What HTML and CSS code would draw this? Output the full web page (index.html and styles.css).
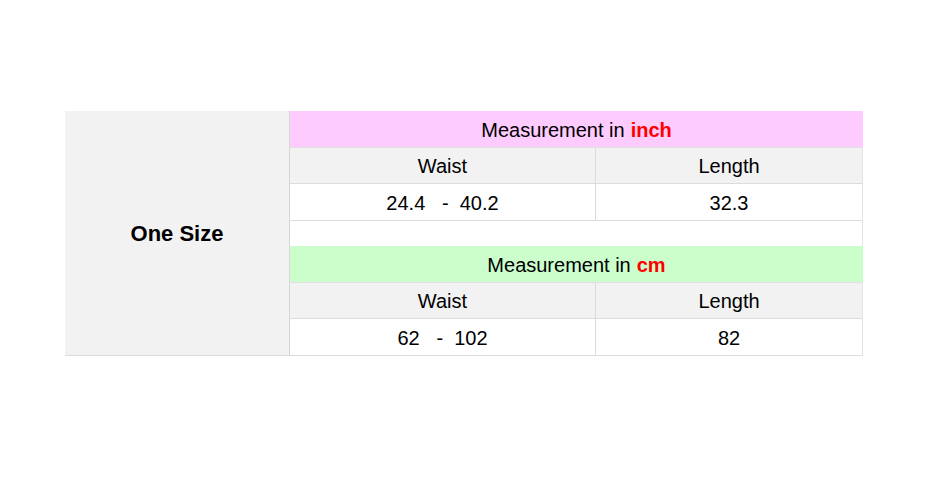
FILE: index.html
```html
<!DOCTYPE html>
<html>
<head>
<meta charset="utf-8">
<link rel="stylesheet" href="styles.css">
</head>
<body>
<div class="page">
  <div class="chart">
    <div class="size">One Size</div>
    <div class="cell head pink span2">Measurement in <b class="unit">inch</b></div>
    <div class="cell grey">Waist</div>
    <div class="cell grey">Length</div>
    <div class="cell white"><span class="pre">24.4   -  40.2</span></div>
    <div class="cell white">32.3</div>
    <div class="cell blank span2"></div>
    <div class="cell head green span2">Measurement in <b class="unit">cm</b></div>
    <div class="cell grey">Waist</div>
    <div class="cell grey">Length</div>
    <div class="cell white"><span class="pre">62   -  102</span></div>
    <div class="cell white">82</div>
  </div>
</div>
</body>
</html>
```
FILE: styles.css
```css
html, body {
  margin: 0;
  padding: 0;
  background: #fff;
}
body {
  font-family: "Liberation Sans", Arial, sans-serif;
  color: #000;
}
.page {
  width: 934px;
  height: 477px;
  padding: 111px 0 0 65px;
  box-sizing: border-box;
}
.chart {
  display: grid;
  grid-template-columns: 225px 306px 267px;
  grid-template-rows: 37px 36px 37px 25px 37px 36px 36px;
  width: 798px;
  border-bottom: 1px solid #dcdcdc;
}
.size {
  grid-row: 1 / 8;
  grid-column: 1;
  background: #f2f2f2;
  display: flex;
  align-items: center;
  justify-content: center;
  font-weight: bold;
  font-size: 22px;
  padding-top: 2px;
  color: #000;
  border-right: 1px solid #d6d6d6;
}
.cell {
  display: flex;
  align-items: center;
  justify-content: center;
  font-size: 20px;
  padding-top: 2px;
  border-bottom: 1px solid #dcdcdc;
  box-sizing: border-box;
}
.cell:last-child, .cell:nth-last-child(2) {
  border-bottom: none;
}
.span2 {
  grid-column: 2 / 4;
}
.pink {
  background: #fecbfe;
}
.green {
  background: #ccfecc;
  border-bottom: none;
}
.grey {
  background: #f2f2f2;
}
.white {
  background: #fff;
}
.grey:nth-of-type(odd), .white:nth-of-type(odd) {
  border-right: 1px solid #dcdcdc;
}
.grey:nth-of-type(even), .white:nth-of-type(even), .blank {
  border-right: 1px solid #e4e4e4;
}
.blank {
  background: #fff;
  border-bottom: none;
}
.head {
  border-bottom: 1px solid #e0e0e0;
}
.unit {
  color: #fe0000;
  font-weight: bold;
  margin-left: 6px;
}
.pre {
  white-space: pre;
}
```
